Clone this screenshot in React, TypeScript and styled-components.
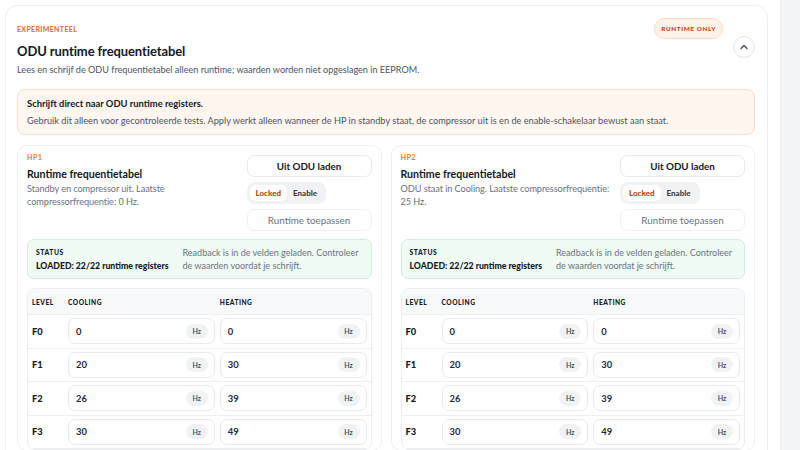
import styled, { createGlobalStyle } from 'styled-components';

const GlobalStyle = createGlobalStyle`
    html, body {
        margin: 0;
        padding: 0;
        background: #ffffff;
        font-family: Lato, "Noto Sans", sans-serif;
        color: #111827;
    }
    * {
        box-sizing: border-box;
    }
`;

interface Level {
    name: string;
    cooling: number;
    heating: number;
}

interface Unit {
    id: string;
    description: string;
    levels: Level[];
}

const levels: Level[] = [
    { name: 'F0', cooling: 0, heating: 0 },
    { name: 'F1', cooling: 20, heating: 30 },
    { name: 'F2', cooling: 26, heating: 39 },
    { name: 'F3', cooling: 30, heating: 49 },
];

const units: Unit[] = [
    {
        id: 'HP1',
        description: 'Standby en compressor uit. Laatste compressorfrequentie: 0 Hz.',
        levels,
    },
    {
        id: 'HP2',
        description: 'ODU staat in Cooling. Laatste compressorfrequentie: 25 Hz.',
        levels,
    },
];

const ChevronUp = () => (
    <svg width="12" height="12" viewBox="0 0 24 24" fill="none" stroke="#374151" strokeWidth="2.4" strokeLinecap="round" strokeLinejoin="round">
        <path d="M6 15l6-6 6 6" />
    </svg>
);

const UnitCard = ({ unit }: { unit: Unit }) => (
    <Panel>
        <PanelTop>
            <PanelIntro>
                <UnitTag>{unit.id}</UnitTag>
                <PanelTitle>Runtime frequentietabel</PanelTitle>
                <PanelText>{unit.description}</PanelText>
            </PanelIntro>
            <Actions>
                <ActionButton>Uit ODU laden</ActionButton>
                <Segmented>
                    <Segment active>Locked</Segment>
                    <Segment>Enable</Segment>
                </Segmented>
                <ActionButton disabled>Runtime toepassen</ActionButton>
            </Actions>
        </PanelTop>
        <StatusBox>
            <StatusMain>
                <StatusLabel>Status</StatusLabel>
                <StatusValue>LOADED: 22/22 runtime registers</StatusValue>
            </StatusMain>
            <StatusNote>
                Readback is in de velden geladen. Controleer de waarden voordat je schrijft.
            </StatusNote>
        </StatusBox>
        <Table>
            <HeadRow>
                <HeadCell>Level</HeadCell>
                <HeadCell>Cooling</HeadCell>
                <HeadCell>Heating</HeadCell>
            </HeadRow>
            {unit.levels.map((level) => (
                <Row key={`${unit.id}_${level.name}`}>
                    <LevelName>{level.name}</LevelName>
                    <Field>
                        <FieldValue>{level.cooling}</FieldValue>
                        <UnitPill>Hz</UnitPill>
                    </Field>
                    <Field>
                        <FieldValue>{level.heating}</FieldValue>
                        <UnitPill>Hz</UnitPill>
                    </Field>
                </Row>
            ))}
        </Table>
    </Panel>
);

const App = () => {
    return (
        <>
            <GlobalStyle />
            <Page>
                <Main>
                    <Card>
                        <Header>
                            <HeaderText>
                                <Eyebrow>Experimenteel</Eyebrow>
                                <Title>ODU runtime frequentietabel</Title>
                                <Lead>
                                    Lees en schrijf de ODU frequentietabel alleen runtime; waarden worden niet opgeslagen in EEPROM.
                                </Lead>
                            </HeaderText>
                            <HeaderSide>
                                <Badge>Runtime only</Badge>
                                <RoundButton aria-label="Inklappen">
                                    <ChevronUp />
                                </RoundButton>
                            </HeaderSide>
                        </Header>
                        <Warning>
                            <WarningTitle>Schrijft direct naar ODU runtime registers.</WarningTitle>
                            <WarningText>
                                Gebruik dit alleen voor gecontroleerde tests. Apply werkt alleen wanneer de HP in standby staat, de compressor uit is en de enable-schakelaar bewust aan staat.
                            </WarningText>
                        </Warning>
                        <Columns>
                            {units.map((unit) => (
                                <UnitCard key={unit.id} unit={unit} />
                            ))}
                        </Columns>
                    </Card>
                </Main>
                <SideStrip />
            </Page>
        </>
    );
};

const Page = styled.div`
    display: flex;
    width: 800px;
    height: 450px;
    overflow: hidden;
`;

const Main = styled.div`
    width: 780px;
    flex-shrink: 0;
    padding: 5px 12px 0 5px;
`;

const SideStrip = styled.div`
    flex: 1;
    background: #f3f4f6;
    border-left: 1px solid #eceef1;
`;

const Card = styled.section`
    background: #ffffff;
    border: 1px solid #eceef0;
    border-radius: 12px;
    padding: 17px 12px 0 11px;
    height: 470px;
`;

const Header = styled.div`
    display: flex;
    justify-content: space-between;
    align-items: flex-start;
`;

const HeaderText = styled.div`
    display: flex;
    flex-direction: column;
`;

const Eyebrow = styled.div`
    font-size: 7px;
    font-weight: 700;
    letter-spacing: 0.05em;
    text-transform: uppercase;
    color: #e0672a;
    line-height: 12px;
`;

const Title = styled.h1`
    margin: 6px 0 0 0;
    font-size: 13px;
    font-weight: 700;
    letter-spacing: -0.1px;
    line-height: 20px;
    color: #111827;
`;

const Lead = styled.p`
    margin: 0;
    font-size: 9.1px;
    line-height: 18px;
    color: #4b5563;
`;

const HeaderSide = styled.div`
    display: flex;
    flex-direction: column;
    align-items: flex-end;
    margin-top: -5px;
`;

const Badge = styled.span`
    display: inline-flex;
    align-items: center;
    height: 21px;
    margin-right: 32px;
    padding: 0 6px;
    border-radius: 999px;
    background: #fff3ea;
    border: 1px solid #fbd8bd;
    color: #c2410c;
    font-size: 6.3px;
    font-weight: 900;
    letter-spacing: 0.1em;
    text-transform: uppercase;
`;

const RoundButton = styled.button`
    display: flex;
    align-items: center;
    justify-content: center;
    width: 22px;
    height: 22px;
    margin-top: -3px;
    padding: 0;
    border-radius: 50%;
    border: 1px solid #e5e7eb;
    background: #ffffff;
`;

const Warning = styled.div`
    margin-top: 10px;
    padding: 7px 9px 7px 9px;
    background: #fff6ef;
    border: 1px solid #fadcc6;
    border-radius: 8px;
`;

const WarningTitle = styled.div`
    font-size: 9.4px;
    font-weight: 700;
    line-height: 13px;
    color: #111827;
`;

const WarningText = styled.div`
    margin-top: 4px;
    font-size: 9.2px;
    line-height: 13px;
    color: #4b5563;
`;

const Columns = styled.div`
    display: grid;
    grid-template-columns: 1fr 1fr;
    gap: 9px;
    margin-top: 10px;
`;

const Panel = styled.div`
    border: 1px solid #eceef0;
    border-radius: 10px;
    padding: 7px 9px 0 9px;
    background: #ffffff;
`;

const PanelTop = styled.div`
    display: flex;
    justify-content: space-between;
    gap: 6px;
`;

const PanelIntro = styled.div`
    display: flex;
    flex-direction: column;
    flex: 1;
`;

const UnitTag = styled.div`
    font-size: 7.3px;
    font-weight: 700;
    letter-spacing: 0.05em;
    color: #f07a32;
    line-height: 10px;
`;

const PanelTitle = styled.div`
    margin-top: 3px;
    font-size: 10.6px;
    font-weight: 700;
    line-height: 16px;
    color: #111827;
`;

const PanelText = styled.div`
    font-size: 9.2px;
    letter-spacing: -0.08px;
    line-height: 13px;
    color: #6b7280;
`;

const Actions = styled.div`
    display: flex;
    flex-direction: column;
    align-items: flex-start;
    gap: 5px;
    width: 125px;
    padding-top: 2px;
    flex-shrink: 0;
`;

const ActionButton = styled.button`
    width: 100%;
    height: 22px;
    padding: 0;
    border: 1px solid #e8eaed;
    border-radius: 7px;
    background: #ffffff;
    font-family: inherit;
    font-size: 9.8px;
    font-weight: 700;
    color: #111827;

    &:disabled {
        font-weight: 400;
        color: #6b7280;
        border-color: #f0f1f3;
    }
`;

const Segmented = styled.div`
    display: flex;
    align-items: center;
    height: 22px;
    padding: 0 3px;
    background: #f1f2f4;
    border-radius: 8px;
`;

const Segment = styled.span<{ active?: boolean }>`
    display: flex;
    align-items: center;
    height: 16px;
    padding: 0 6px;
    border-radius: 6px;
    font-size: 8px;
    font-weight: 900;
    background: ${({ active }) => (active ? '#ffffff' : 'transparent')};
    color: ${({ active }) => (active ? '#c2410c' : '#374151')};
`;

const StatusBox = styled.div`
    display: flex;
    align-items: center;
    gap: 14px;
    margin-top: 8px;
    padding: 6px 8px;
    background: #f0fbf4;
    border: 1px solid #cdeedb;
    border-radius: 7px;
`;

const StatusMain = styled.div`
    display: flex;
    flex-direction: column;
    gap: 1px;
    flex-shrink: 0;
`;

const StatusLabel = styled.div`
    font-size: 6.8px;
    font-weight: 900;
    letter-spacing: 0.08em;
    text-transform: uppercase;
    line-height: 11px;
    color: #111827;
`;

const StatusValue = styled.div`
    font-size: 8.7px;
    font-weight: 900;
    line-height: 13px;
    color: #111827;
`;

const StatusNote = styled.div`
    font-size: 9px;
    line-height: 13px;
    color: #6b7280;
`;

const Table = styled.div`
    margin-top: 9px;
    border: 1px solid #eceef0;
    border-radius: 8px;
    overflow: hidden;
`;

const HeadRow = styled.div`
    display: grid;
    grid-template-columns: 31px 1fr 1fr;
    gap: 5px;
    align-items: center;
    height: 26px;
    padding: 0 4px;
    background: #f8f9fa;
    border-bottom: 1px solid #eceef0;
`;

const HeadCell = styled.div`
    font-size: 6.6px;
    font-weight: 900;
    letter-spacing: 0.08em;
    text-transform: uppercase;
    color: #111827;
`;

const Row = styled.div`
    display: grid;
    grid-template-columns: 31px 1fr 1fr;
    gap: 5px;
    align-items: center;
    height: 33.5px;
    padding: 0 4px;
    border-bottom: 1px solid #eceef0;
`;

const LevelName = styled.div`
    font-size: 9.3px;
    font-weight: 900;
    color: #111827;
`;

const Field = styled.div`
    display: flex;
    align-items: center;
    justify-content: space-between;
    height: 26px;
    padding: 0 6px 0 7px;
    border: 1px solid #e8eaed;
    border-radius: 7px;
    background: #ffffff;
`;

const FieldValue = styled.span`
    font-size: 9.4px;
    font-weight: 700;
    color: #1f2937;
`;

const UnitPill = styled.span`
    display: flex;
    align-items: center;
    justify-content: center;
    width: 22px;
    height: 15px;
    border-radius: 999px;
    background: #f1f2f4;
    font-size: 7px;
    font-weight: 700;
    color: #4b5563;
`;

export default App;
